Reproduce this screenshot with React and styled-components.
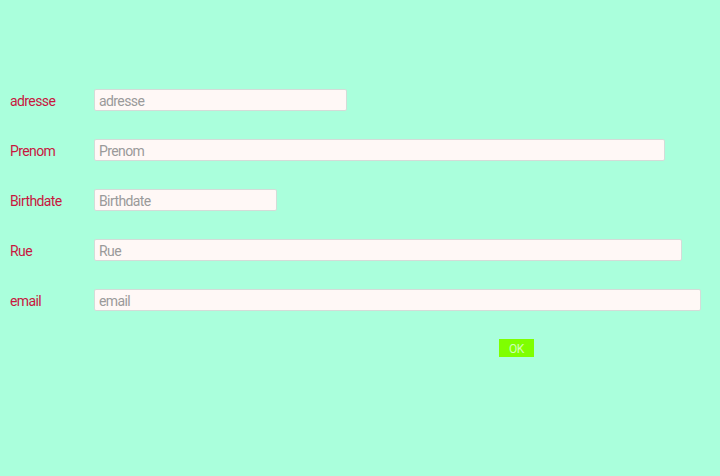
import styled, { createGlobalStyle } from 'styled-components';

const GlobalStyle = createGlobalStyle`
  html, body {
    margin: 0;
    padding: 0;
    background: #aaffdc;
  }
  body {
    font-family: "Roboto", "Liberation Sans", sans-serif;
  }
`;

const Page = styled.div`
  width: 720px;
  height: 476px;
  background: #aaffdc;
  overflow: hidden;
`;

const Form = styled.form`
  display: flex;
  flex-direction: column;
  gap: 28px;
  padding: 89px 0 0 10px;
`;

const Row = styled.div`
  display: flex;
  align-items: center;
  height: 22px;
`;

const Label = styled.label`
  width: 84px;
  flex-shrink: 0;
  padding-top: 2px;
  font-size: 14px;
  letter-spacing: -0.6px;
  color: #c8173f;
`;

const Field = styled.input`
  box-sizing: border-box;
  width: ${(props) => props.$width}px;
  height: 22px;
  margin: 0;
  padding: 2px 4px 0;
  border: 1px solid #d4dcd8;
  border-radius: 2px;
  background: #fff8f6;
  font-family: inherit;
  font-size: 14px;
  letter-spacing: -0.6px;
  color: #333;
  outline: none;
  &::placeholder {
    color: #9a9a9a;
  }
`;

const Submit = styled.button`
  align-self: flex-start;
  margin-left: 489px;
  width: 35px;
  height: 18px;
  padding: 1px 0 0;
  border: none;
  background: #7fff00;
  color: #d0ffb8;
  font-family: inherit;
  font-size: 12px;
  letter-spacing: -0.4px;
`;

const fields = [
  { name: 'adresse', width: 253 },
  { name: 'Prenom', width: 571 },
  { name: 'Birthdate', width: 183 },
  { name: 'Rue', width: 588 },
  { name: 'email', width: 607 },
];

const App = () => {
  return (
    <Page>
      <GlobalStyle />
      <Form onSubmit={(e) => e.preventDefault()}>
        {fields.map((f) => (
          <Row key={f.name}>
            <Label>{f.name}</Label>
            <Field type="text" placeholder={f.name} $width={f.width} />
          </Row>
        ))}
        <Submit type="submit">OK</Submit>
      </Form>
    </Page>
  );
};

export default App;
